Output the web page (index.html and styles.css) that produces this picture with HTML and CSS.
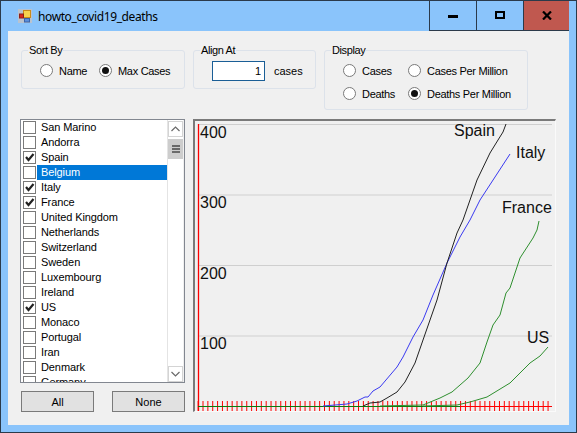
FILE: index.html
```html
<!DOCTYPE html>
<html lang="en">
<head>
    <meta charset="UTF-8">
    <meta name="viewport" content="width=device-width, initial-scale=1.0">
    <title>howto_covid19_deaths</title>
    <link rel="stylesheet" href="styles.css">
</head>
<body>
    <div class="window">
        <div class="titlebar">
            <svg class="app-icon" width="14" height="14" viewBox="0 0 14 14">
                <rect width="14" height="14" fill="#b9c3cf"/>
                <rect x="5.5" y="1.5" width="7" height="7" fill="#f7d24e" stroke="#c98a1b"/>
                <rect x="1.5" y="5" width="4" height="4" fill="#d8261c" stroke="#8f1d18"/>
                <rect x="6.5" y="9.5" width="5" height="3.5" fill="#5b8fdc" stroke="#3b62a8"/>
            </svg>
            <span class="title">howto_covid19_deaths</span>
            <div class="caption-btn min"><span class="min-glyph"></span></div>
            <div class="caption-btn max"><span class="max-glyph"></span></div>
            <div class="caption-btn close">
                <svg width="10" height="9" viewBox="0 0 10 9"><path d="M1 0.5 L9 8.5 M9 0.5 L1 8.5" stroke="#000" stroke-width="2.2" fill="none"/></svg>
            </div>
        </div>

        <div class="client">
            <div class="top-row">
                <fieldset class="group sort-group">
                    <legend>Sort By</legend>
                    <div class="options">
                        <label class="option"><span class="radio"></span>Name</label>
                        <label class="option"><span class="radio on"></span>Max Cases</label>
                    </div>
                </fieldset>
                <fieldset class="group align-group">
                    <legend>Align At</legend>
                    <div class="align-row">
                        <input class="cases-input" type="text" value="1">
                        <span>cases</span>
                    </div>
                </fieldset>
                <fieldset class="group display-group">
                    <legend>Display</legend>
                    <div class="display-grid">
                        <label class="option"><span class="radio"></span>Cases</label>
                        <label class="option"><span class="radio"></span>Cases Per Million</label>
                        <label class="option"><span class="radio"></span>Deaths</label>
                        <label class="option"><span class="radio on"></span>Deaths Per Million</label>
                    </div>
                </fieldset>
            </div>

            <div class="main-row">
                <div class="left-col">
                    <div class="list">
                        <div class="rows">
                            <div class="row"><span class="box"></span><span class="name">San Marino</span></div>
                            <div class="row"><span class="box"></span><span class="name">Andorra</span></div>
                            <div class="row"><span class="box"><svg viewBox="0 0 11 11"><path d="M2 5 L4.5 8 L9.5 2"/></svg></span><span class="name">Spain</span></div>
                            <div class="row selected"><span class="box"></span><span class="name">Belgium</span></div>
                            <div class="row"><span class="box"><svg viewBox="0 0 11 11"><path d="M2 5 L4.5 8 L9.5 2"/></svg></span><span class="name">Italy</span></div>
                            <div class="row"><span class="box"><svg viewBox="0 0 11 11"><path d="M2 5 L4.5 8 L9.5 2"/></svg></span><span class="name">France</span></div>
                            <div class="row"><span class="box"></span><span class="name">United Kingdom</span></div>
                            <div class="row"><span class="box"></span><span class="name">Netherlands</span></div>
                            <div class="row"><span class="box"></span><span class="name">Switzerland</span></div>
                            <div class="row"><span class="box"></span><span class="name">Sweden</span></div>
                            <div class="row"><span class="box"></span><span class="name">Luxembourg</span></div>
                            <div class="row"><span class="box"></span><span class="name">Ireland</span></div>
                            <div class="row"><span class="box"><svg viewBox="0 0 11 11"><path d="M2 5 L4.5 8 L9.5 2"/></svg></span><span class="name">US</span></div>
                            <div class="row"><span class="box"></span><span class="name">Monaco</span></div>
                            <div class="row"><span class="box"></span><span class="name">Portugal</span></div>
                            <div class="row"><span class="box"></span><span class="name">Iran</span></div>
                            <div class="row"><span class="box"></span><span class="name">Denmark</span></div>
                            <div class="row"><span class="box"></span><span class="name">Germany</span></div>
                        </div>
                        <div class="scrollbar">
                            <div class="arrow">
                                <svg width="9" height="6" viewBox="0 0 9 6"><path d="M0.5 5 L4.5 1 L8.5 5" stroke="#6a6a6a" stroke-width="1.2" fill="none"/></svg>
                            </div>
                            <div class="thumb"><span></span><span></span><span></span></div>
                            <div class="track"></div>
                            <div class="arrow">
                                <svg width="9" height="6" viewBox="0 0 9 6"><path d="M0.5 1 L4.5 5 L8.5 1" stroke="#6a6a6a" stroke-width="1.2" fill="none"/></svg>
                            </div>
                        </div>
                    </div>
                    <div class="buttons">
                        <button class="btn">All</button>
                        <button class="btn">None</button>
                    </div>
                </div>

                <div class="chart">
                    <!-- viewBox uses window coordinates so curves can be read straight off the screen -->
                    <svg width="361" height="291" viewBox="195 121 361 291">
                        <path class="grid" d="M198 124.5H552 M198 195H552 M198 265.5H552 M198 336H552"/>
                        <path class="axis-v" d="M198.5 124V411"/>
                        <path class="axis-h" d="M198 406.5H552"/>
                        <line class="ticks" x1="197.64" y1="406" x2="548.6" y2="406"/>
                        <path class="zero" d="M198 406.5H460"/>

                        <polyline class="curve us" points="423,406 457,405 470,402 487,397 510,383 530,363 540,356 548,347"/>
                        <polyline class="curve france" points="380,406 423,405 440,398 452,392 468,378 480,363 487,342 493,325 500,315 506,293 510,288 516,270 520,258 533,238 537,230 539,221"/>
                        <polyline class="curve italy" points="323,406 347,404 357,401 365,397 368,397 373,391 380,387 397,367 403,357 413,337 423,320 433,295 447,263 460,237 470,220 480,200 495,177 510,154"/>
                        <polyline class="curve spain" points="363,406 370,403 380,402 387,398 397,392 405,382 415,363 423,340 437,300 447,263 457,233 463,220 477,180 490,153 498,140 503,132 506,124"/>

                        <text x="200" y="138">400</text>
                        <text x="200" y="208">300</text>
                        <text x="200" y="279">200</text>
                        <text x="200" y="349">100</text>
                        <text x="454" y="136">Spain</text>
                        <text x="516" y="158">Italy</text>
                        <text x="502" y="213">France</text>
                        <text x="527" y="343">US</text>
                    </svg>
                </div>
            </div>
        </div>
    </div>
</body>
</html>
```

FILE: styles.css
```css
html, body {
    margin: 0;
    padding: 0;
}
body {
    width: 577px;
    height: 433px;
    overflow: hidden;
    font-family: "Liberation Sans", Arial, sans-serif;
    font-size: 11px;
    color: #000;
}
.window {
    box-sizing: border-box;
    width: 577px;
    height: 433px;
    padding: 0 7px 7px;
    border: 1px solid #2b3a4a;
    background-color: #8ac4fb;
    display: flex;
    flex-direction: column;
}
.titlebar {
    height: 30px;
    flex: none;
    display: flex;
    align-items: center;
}
.app-icon {
    margin: 0 6px 0 10px;
}
.title {
    font-family: "Noto Sans", sans-serif;
    font-size: 12px;
    letter-spacing: -0.4px;
    flex: 1;
}
.caption-btn {
    height: 30px;
    margin-top: -1px;
    display: flex;
    align-items: center;
    justify-content: center;
    border-left: 1px solid #2b3a4a;
    border-bottom: 1px solid #2b3a4a;
    box-sizing: border-box;
}
.caption-btn.min, .caption-btn.max {
    width: 47px;
}
.caption-btn.close {
    width: 46px;
    background-color: #c0584f;
}
.min-glyph {
    width: 10px;
    height: 3px;
    margin-top: 3px;
    background-color: #000;
}
.max-glyph {
    box-sizing: border-box;
    width: 10px;
    height: 8px;
    border: 2px solid #000;
}
.client {
    flex: 1;
    background-color: #f0f0f0;
    padding: 13px 0 0 12px;
    display: flex;
    flex-direction: column;
}
.top-row {
    height: 75px;
    flex: none;
    display: flex;
    align-items: flex-start;
    gap: 8px;
    margin-left: 1px;
}
.group {
    box-sizing: border-box;
    margin: 0;
    padding: 0;
    min-width: 0;
    border: 1px solid #dce2ea;
    border-radius: 3px;
    height: 45px;
}
.group legend {
    margin-left: 6px;
    padding: 0 1px;
    line-height: 13px;
    letter-spacing: -0.4px;
}
.sort-group {
    width: 164px;
}
.align-group {
    width: 123px;
}
.display-group {
    width: 204px;
    height: 66px;
}
.options {
    display: flex;
    padding: 6px 0 0 18px;
}
.option {
    display: flex;
    align-items: center;
    gap: 6px;
    height: 15px;
    letter-spacing: -0.3px;
}
.options .option:first-child {
    width: 59px;
}
.radio {
    box-sizing: border-box;
    width: 13px;
    height: 13px;
    flex: none;
    border: 1px solid #7a7a7a;
    border-radius: 50%;
    background-color: #fff;
    display: flex;
    align-items: center;
    justify-content: center;
}
.radio.on::after {
    content: "";
    width: 7px;
    height: 7px;
    border-radius: 50%;
    background-color: #111;
}
.align-row {
    display: flex;
    align-items: center;
    gap: 9px;
    padding: 4px 0 0 18px;
}
.cases-input {
    box-sizing: border-box;
    width: 53px;
    height: 20px;
    margin: 0;
    padding: 0 3px;
    border: 1px solid #1a5e96;
    outline: none;
    background-color: #fff;
    font-family: inherit;
    font-size: 11px;
    text-align: right;
}
.display-grid {
    display: grid;
    grid-template-columns: 65px auto;
    grid-auto-rows: 23px;
    align-items: center;
    padding: 0 0 0 18px;
    margin-top: 2px;
}
.main-row {
    flex: 1;
    display: flex;
    gap: 8px;
}
.left-col {
    width: 165px;
    flex: none;
}
.list {
    box-sizing: border-box;
    height: 264px;
    border: 1px solid #828790;
    background-color: #fff;
    display: flex;
}
.rows {
    flex: 1;
    overflow: hidden;
    letter-spacing: -0.1px;
}
.row {
    display: flex;
    align-items: center;
    height: 15px;
}
.box {
    box-sizing: border-box;
    width: 13px;
    height: 13px;
    flex: none;
    margin: 0 1px 0 2px;
    border: 1px solid #7a7a7a;
    background-color: #fff;
}
.box svg {
    display: block;
    width: 11px;
    height: 11px;
}
.box path {
    fill: none;
    stroke: #222;
    stroke-width: 2.2;
}
.name {
    flex: 1;
    height: 15px;
    line-height: 15px;
    padding-left: 4px;
}
.row.selected .name {
    background-color: #0078d7;
    color: #fff;
}
.scrollbar {
    box-sizing: border-box;
    width: 17px;
    flex: none;
    display: flex;
    flex-direction: column;
    padding-top: 1px;
    border-right: 1px solid #f0f0f0;
    border-left: 1px solid #e4e4e4;
}
.arrow {
    height: 16px;
    box-sizing: border-box;
    border: 1px solid #d4d4d4;
    display: flex;
    align-items: center;
    justify-content: center;
    flex: none;
}
.thumb {
    height: 20px;
    margin-top: 2px;
    background-color: #cdcdcd;
    flex: none;
    display: flex;
    flex-direction: column;
    align-items: center;
    justify-content: center;
    gap: 1px;
}
.thumb span {
    width: 8px;
    height: 2px;
    background-color: #6a6a6a;
}
.track {
    flex: 1;
}
.buttons {
    display: flex;
    justify-content: space-between;
    margin: 8px 0 0 1px;
}
.btn {
    box-sizing: border-box;
    width: 73px;
    height: 21px;
    padding: 0;
    border: 1px solid #7a7a7a;
    background-color: #e1e1e1;
    font-family: inherit;
    font-size: 11px;
}
.chart {
    box-sizing: border-box;
    width: 363px;
    height: 293px;
    border-style: solid;
    border-width: 2px 1px 1px 2px;
    border-color: #7a7a7a #fafafa #fafafa #7a7a7a;
}
.chart svg {
    display: block;
}
.chart text {
    font-family: "Liberation Sans", Arial, sans-serif;
    font-size: 16px;
    fill: #111;
}
.grid {
    stroke: #cfcfcf;
    stroke-width: 1.2;
    fill: none;
}
.axis-v {
    stroke: #ff0000;
    stroke-width: 1.3;
}
.axis-h {
    stroke: #ff0000;
    stroke-width: 1;
}
.ticks {
    stroke: #ff0000;
    stroke-width: 10;
    stroke-dasharray: 1 3.86;
}
.zero {
    stroke: #0a7a0a;
    stroke-width: 1;
}
.curve {
    fill: none;
    stroke-width: 1;
    stroke-linejoin: round;
}
.spain {
    stroke: #222;
}
.italy {
    stroke: #3a3af0;
}
.france, .us {
    stroke: #2f8f2f;
}
```
